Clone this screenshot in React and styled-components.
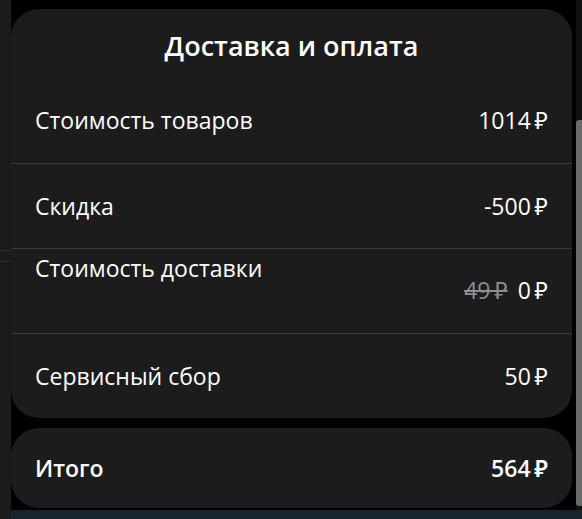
import styled, { createGlobalStyle } from "styled-components"

const GlobalStyle = createGlobalStyle`
  html, body {
    margin: 0;
    padding: 0;
    height: 519px;
    overflow: hidden;
    background: #000;
  }
  body {
    font-family: "Open Sans", "Noto Sans", sans-serif;
    color: #fff;
    -webkit-font-smoothing: antialiased;
  }
`

const Screen = styled.div`
  display: flex;
  height: 519px;
  background: #000;
`

const SideStrip = styled.div`
  width: 11px;
  flex-shrink: 0;
  background: #1b1b1b;
  display: flex;
  flex-direction: column;
  padding-top: 250px;
  box-sizing: border-box;
  gap: 10px;
  span {
    display: block;
    height: 1px;
    background: #2f2f2f;
  }
`

const Content = styled.main`
  flex: 1;
  padding: 9px 0 0;
  display: flex;
  flex-direction: column;
  gap: 10px;
`

const Card = styled.section`
  background: #1c1c1c;
  border-radius: 28px;
  overflow: hidden;
`

const Title = styled.h2`
  margin: 0;
  padding: 18px 0 13px;
  text-align: center;
  font-size: 27px;
  line-height: 38px;
  font-weight: 600;
`

const Row = styled.div`
  display: flex;
  justify-content: space-between;
  align-items: center;
  height: ${p => p.$height || 85}px;
  padding: 0 24px;
  box-sizing: border-box;
  border-top: ${p => (p.$divider ? "1px solid #3a3a3a" : "none")};
  font-size: 23px;
  line-height: 31px;
  font-weight: ${p => (p.$bold ? 600 : 400)};
`

const Label = styled.span`
  align-self: ${p => (p.$top ? "flex-start" : "center")};
  padding-top: ${p => (p.$top ? "4px" : "0")};
`

const Price = styled.span`
  display: flex;
  align-items: center;
  gap: 10px;
  padding-top: ${p => (p.$low ? "26px" : "0")};
  align-self: ${p => (p.$low ? "flex-start" : "center")};
`

const OldPrice = styled.s`
  color: #8e8e8e;
`

const ScrollTrack = styled.div`
  width: 6px;
  flex-shrink: 0;
  margin-left: 4px;
  background: #101010;
  display: flex;
  flex-direction: column;
  padding-top: 120px;
  padding-bottom: 13px;
  box-sizing: border-box;
`

const Thumb = styled.div`
  flex: 1;
  background: #6a6a6a;
  border-radius: 3px 0 0 3px;
`

const BottomBar = styled.div`
  position: fixed;
  left: 11px;
  right: 0;
  bottom: 0;
  height: 9px;
  background: #19232e;
`

const rub = v => `${v}\u2009₽`

const App = () => {
  return (
    <>
      <GlobalStyle />
      <Screen>
        <SideStrip>
          <span />
          <span />
        </SideStrip>
        <Content>
          <Card>
            <Title>Доставка и оплата</Title>
            <Row>
              <Label>Стоимость товаров</Label>
              <Price>{rub(1014)}</Price>
            </Row>
            <Row $divider>
              <Label>Скидка</Label>
              <Price>{rub(-500)}</Price>
            </Row>
            <Row $divider>
              <Label $top>Стоимость доставки</Label>
              <Price $low>
                <OldPrice>{rub(49)}</OldPrice>
                <span>{rub(0)}</span>
              </Price>
            </Row>
            <Row $divider>
              <Label>Сервисный сбор</Label>
              <Price>{rub(50)}</Price>
            </Row>
          </Card>
          <Card>
            <Row $bold $height={80}>
              <Label>Итого</Label>
              <Price>{rub(564)}</Price>
            </Row>
          </Card>
        </Content>
        <ScrollTrack>
          <Thumb />
        </ScrollTrack>
      </Screen>
      <BottomBar />
    </>
  )
}

export default App
